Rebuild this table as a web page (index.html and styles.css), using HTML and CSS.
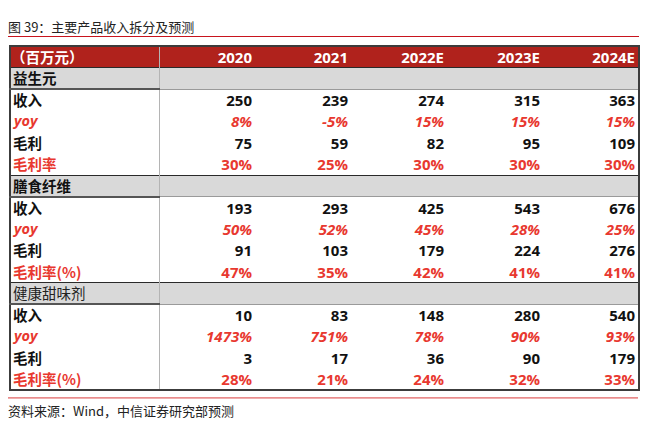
FILE: index.html
```html
<!DOCTYPE html>
<html lang="zh-CN">
<head>
<meta charset="utf-8">
<link rel="stylesheet" href="styles.css">
</head>
<body>
<div class="page">
  <div class="title">图 39：主要产品收入拆分及预测</div>
  <table class="tbl">
    <colgroup>
      <col class="c-label">
      <col class="c-year"><col class="c-year"><col class="c-year"><col class="c-year"><col class="c-year">
    </colgroup>
    <thead>
      <tr class="head">
        <th class="lbl">（百万元）</th>
        <th>2020</th><th>2021</th><th>2022E</th><th>2023E</th><th>2024E</th>
      </tr>
    </thead>
    <tbody>
      <tr class="sect"><td class="lbl">益生元</td><td></td><td></td><td></td><td></td><td></td></tr>
      <tr class="first"><td class="lbl">收入</td><td>250</td><td>239</td><td>274</td><td>315</td><td>363</td></tr>
      <tr class="yoy"><td class="lbl">yoy</td><td>8%</td><td>-5%</td><td>15%</td><td>15%</td><td>15%</td></tr>
      <tr><td class="lbl">毛利</td><td>75</td><td>59</td><td>82</td><td>95</td><td>109</td></tr>
      <tr class="rate"><td class="lbl">毛利率</td><td>30%</td><td>25%</td><td>30%</td><td>30%</td><td>30%</td></tr>

      <tr class="sect"><td class="lbl">膳食纤维</td><td></td><td></td><td></td><td></td><td></td></tr>
      <tr class="first"><td class="lbl">收入</td><td>193</td><td>293</td><td>425</td><td>543</td><td>676</td></tr>
      <tr class="yoy"><td class="lbl">yoy</td><td>50%</td><td>52%</td><td>45%</td><td>28%</td><td>25%</td></tr>
      <tr><td class="lbl">毛利</td><td>91</td><td>103</td><td>179</td><td>224</td><td>276</td></tr>
      <tr class="rate"><td class="lbl">毛利率(%)</td><td>47%</td><td>35%</td><td>42%</td><td>41%</td><td>41%</td></tr>

      <tr class="sect light"><td class="lbl">健康甜味剂</td><td></td><td></td><td></td><td></td><td></td></tr>
      <tr class="first"><td class="lbl">收入</td><td>10</td><td>83</td><td>148</td><td>280</td><td>540</td></tr>
      <tr class="yoy"><td class="lbl">yoy</td><td>1473%</td><td>751%</td><td>78%</td><td>90%</td><td>93%</td></tr>
      <tr><td class="lbl">毛利</td><td>3</td><td>17</td><td>36</td><td>90</td><td>179</td></tr>
      <tr class="rate"><td class="lbl">毛利率(%)</td><td>28%</td><td>21%</td><td>24%</td><td>32%</td><td>33%</td></tr>
    </tbody>
  </table>
  <div class="rule"></div>
  <div class="source">资料来源：Wind，中信证券研究部预测</div>
</div>
</body>
</html>
```

FILE: styles.css
```css
html, body {
  margin: 0;
  padding: 0;
  background: #ffffff;
}

.page {
  padding: 18px 9px 0 8px;
  width: 631px;
  font-family: "Open Sans", "Noto Sans CJK SC", sans-serif;
}

.title {
  font-family: "Noto Sans CJK SC", sans-serif;
  font-size: 13px;
  line-height: 18px;
  color: #222;
  border-bottom: 1px solid #c8141e;
  margin-bottom: 8px;
}

.tbl {
  margin-left: 1px;
  width: 630px;
  table-layout: fixed;
  border-collapse: collapse;
  border: 2px solid #3c3c3c;
  font-size: 15px;
  font-weight: 700;
  color: #111;
}

.c-label { width: 149px; }
.c-year { width: 96px; }

.tbl th,
.tbl td {
  height: 21.5px;
  padding: 0 3px 0 2px;
  text-align: right;
  line-height: 20px;
  white-space: nowrap;
  box-sizing: border-box;
  font-family: "Open Sans", "Noto Sans CJK SC", sans-serif;
}

.tbl .lbl {
  text-align: left;
  font-family: "Noto Sans CJK SC", sans-serif;
  font-size: 14.5px;
  border-right: 1px solid #b4b4b4;
}

.head th {
  background: #b0221c;
  color: #ffffff;
  font-weight: 700;
}

.head th.lbl {
  padding-left: 0;
}

.sect td {
  background: #d9d9d9;
  border-top: 1px solid #2a2a2a;
  border-bottom: 1px solid #9a9a9a;
}

.sect td.lbl {
  border-bottom: 2px solid #555;
}

.sect.light td.lbl {
  font-weight: 400;
  color: #222;
}

.yoy td {
  color: #e8382f;
  font-style: italic;
}

.yoy td.lbl {
  font-family: "Open Sans", sans-serif;
  padding-left: 3px;
}

.rate td {
  color: #e8382f;
}

.rule {
  margin-top: 6px;
  height: 2px;
  background: linear-gradient(#e57c7c, #f3bcbc);
  width: 630px;
}

.source {
  font-family: "Noto Sans CJK SC", sans-serif;
  font-size: 13px;
  line-height: 18px;
  color: #222;
  margin-top: 3px;
}
```
